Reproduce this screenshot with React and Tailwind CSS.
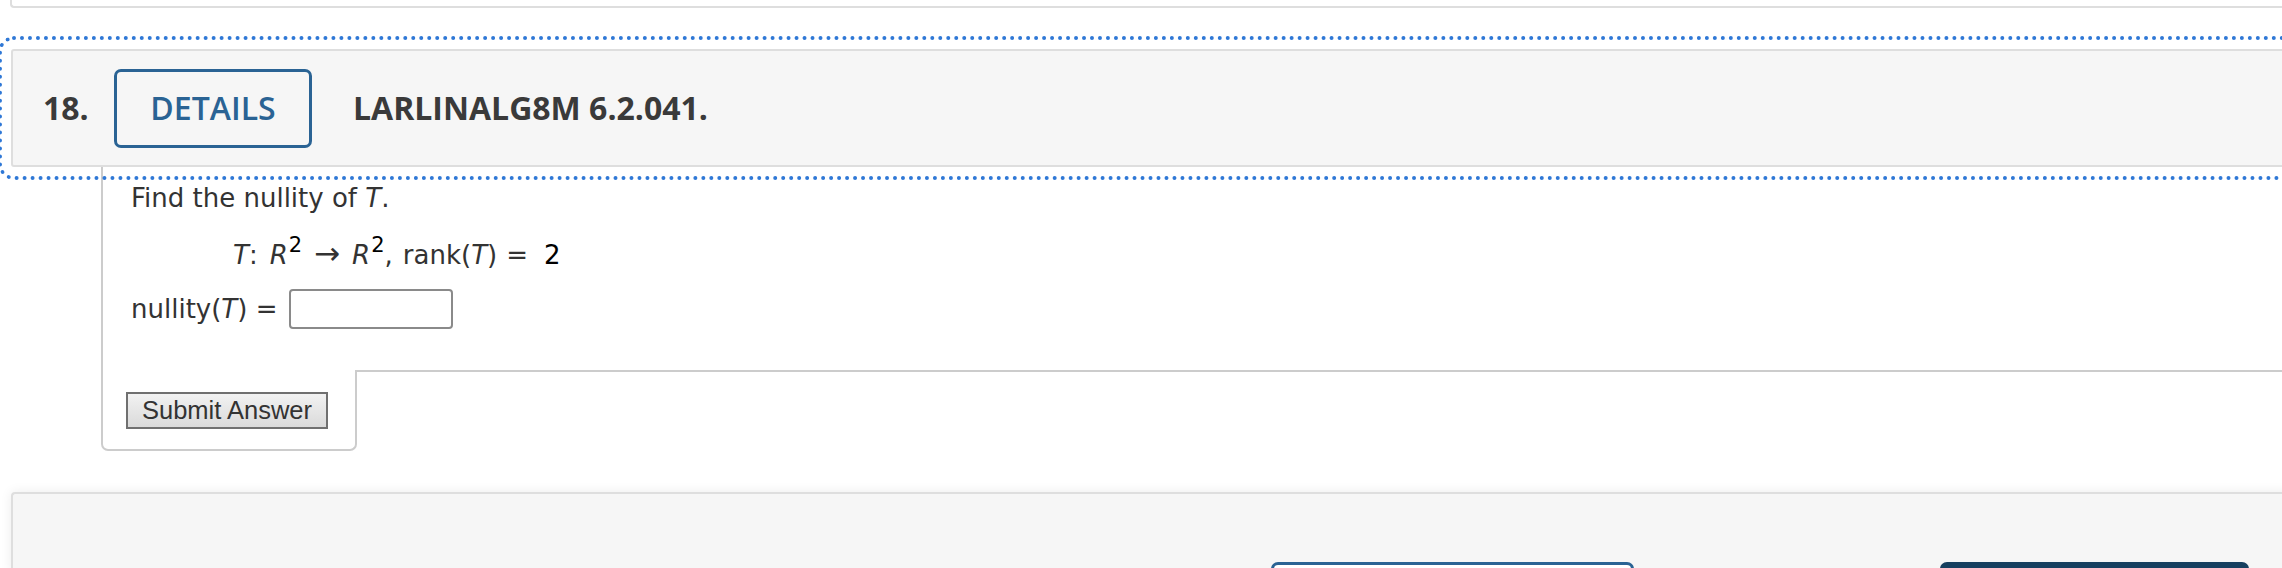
export default function App() {
  return (
    <div className="relative w-[2282px] h-[568px] overflow-hidden bg-white">
      <div className="w-[2340px]">
        {/* previous card remnant */}
        <div className="ml-[10px] h-[8px] border-l-2 border-b-2 border-[#dedede] rounded-bl-[4px]" />

        {/* question header */}
        <div className="mt-[41px] ml-[11px] h-[118px] bg-[#f6f6f6] border-2 border-[#dedede] rounded-[3px] outline-4 outline-dotted outline-[#2f78d6] outline-offset-[9px] flex items-center pl-[30px] font-['Open_Sans',sans-serif] text-[32px]">
          <span className="w-[71px] font-bold text-[#3a3a3a]">18.</span>
          <button className="w-[198px] h-[79px] border-[3px] border-[#2a6394] rounded-[7px] text-[#2a6394] font-semibold flex items-center justify-center">
            DETAILS
          </button>
          <span className="ml-[41px] font-bold text-[#3a3a3a]">LARLINALG8M 6.2.041.</span>
        </div>

        {/* content */}
        <div className="ml-[101px] font-['DejaVu_Sans',Verdana,sans-serif] text-[26px] leading-[36px] text-[#333]">
          <div className="h-[203px] border-l-2 border-[#cccccc] pl-[28px] pt-[13px]">
            <div>
              Find the nullity of <i>T</i>.
            </div>
            <div className="mt-[21px] pl-[102px] h-[36px] whitespace-nowrap">
              <i>T</i>:<i className="ml-[12px]">R</i>
              <span className="relative -top-[12px] text-[21px] leading-none text-black ml-[1px]">2</span>
              <span className="ml-[12px] mr-[12px] text-[31px] leading-none">→</span>
              <i>R</i>
              <span className="relative -top-[12px] text-[21px] leading-none text-black ml-[1px]">2</span>
              <span>,</span>
              <span className="ml-[10px]">
                rank(<i>T</i>)
              </span>
              <span className="ml-[9px]">=</span>
              <span className="ml-[16px] text-black">2</span>
            </div>
            <div className="mt-[16px] h-[40px] flex items-center">
              <span>
                nullity(<i>T</i>) =
              </span>
              <div className="ml-[12px] w-[164px] h-[40px] border-2 border-[#8a8a8a] rounded-[4px] bg-white" />
            </div>
          </div>
          <div className="flex">
            <div className="w-[256px] h-[81px] border-l-2 border-r-2 border-b-2 border-[#cccccc] rounded-b-[7px] pl-[23px] pt-[22px]">
              <button className="w-[202px] h-[37px] border-2 border-[#707070] bg-gradient-to-b from-[#f2f2f2] to-[#dadada] font-['Liberation_Sans',Arial,sans-serif] text-[25.5px] leading-none text-[#333] flex items-center justify-center">
                Submit Answer
              </button>
            </div>
            <div className="flex-1 border-t-2 border-[#cccccc]" />
          </div>
        </div>

        {/* bottom panel */}
        <div className="mt-[41px] ml-[11px] h-[80px] bg-[#f6f6f6] border-t-2 border-l-2 border-[#dedede] rounded-tl-[4px] shadow-[0_0_12px_rgba(0,0,0,0.08)] flex pt-[68px]">
          <div className="ml-[1258px] w-[363px] h-[40px] border-[3px] border-[#2a6394] rounded-[7px] bg-white" />
          <div className="ml-[306px] w-[309px] h-[40px] rounded-[7px] bg-[#163f5f]" />
        </div>
      </div>
    </div>
  );
}
